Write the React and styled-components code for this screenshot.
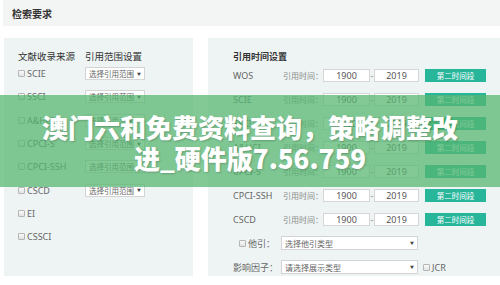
import React from "react";
import styled, { createGlobalStyle } from "styled-components";

const GlobalStyle = createGlobalStyle`
  html, body {
    margin: 0;
    padding: 0;
    background: #ffffff;
  }
  body {
    font-family: "Noto Sans", "Noto Sans CJK SC", sans-serif;
    color: #666;
  }
`;

const sources = ["SCIE", "SSCI", "A&HCI", "CPCI-S", "CPCI-SSH", "CSCD", "EI", "CSSCI"];
const withRange = ["SCIE", "SSCI", "A&HCI", "CPCI-S", "CPCI-SSH", "CSCD"];
const timeRows = ["WOS", "SCIE", "SSCI", "A&HCI", "CPCI-S", "CPCI-SSH", "CSCD"];

function App() {
  return (
    <Page>
      <GlobalStyle />
      <Header>检索要求</Header>
      <Panels>
        <LeftPanel>
          <Grid>
            <ColTitle>文献收录来源</ColTitle>
            <ColTitle>引用范围设置</ColTitle>
            {sources.map((s) => (
              <React.Fragment key={s}>
                <Source>
                  <Check />
                  {s}
                </Source>
                <div>
                  {withRange.includes(s) && (
                    <SmallSelect>
                      选择引用范围<Arrow>▼</Arrow>
                    </SmallSelect>
                  )}
                </div>
              </React.Fragment>
            ))}
          </Grid>
        </LeftPanel>

        <RightPanel>
          <PanelTitle>引用时间设置</PanelTitle>
          {timeRows.map((r) => (
            <TimeRow key={r}>
              <RowLabel>{r}</RowLabel>
              <Hint>引用时间：</Hint>
              <YearBox $w={47}>1900</YearBox>
              <Dash>-</Dash>
              <YearBox $w={45}>2019</YearBox>
              <GreenButton>第二时间段</GreenButton>
            </TimeRow>
          ))}
          <TimeRow>
            <RowLabel $indent>
              <Check />
              他引：
            </RowLabel>
            <WideSelect>
              选择他引类型<Arrow>▼</Arrow>
            </WideSelect>
          </TimeRow>
          <TimeRow>
            <RowLabel>影响因子：</RowLabel>
            <WideSelect>
              请选择展示类型<Arrow>▼</Arrow>
            </WideSelect>
            <Jcr>
              <Check />
              JCR
            </Jcr>
          </TimeRow>
        </RightPanel>
      </Panels>

      <Banner>
        <BannerText>
          澳门六和免费资料查询，策略调整改
          <br />
          进_硬件版7.56.759
        </BannerText>
      </Banner>
    </Page>
  );
}

const Page = styled.div`
  position: relative;
  width: 500px;
  height: 285px;
  overflow: hidden;
  padding-left: 4px;
  box-sizing: border-box;
`;

const Header = styled.div`
  height: 26px;
  margin-left: -1px;
  padding-left: 9px;
  display: flex;
  align-items: center;
  background: #f3f4f4;
  color: #333;
  font-family: "Noto Sans CJK SC", sans-serif;
  font-size: 10px;
  font-weight: 700;
`;

const Panels = styled.div`
  display: flex;
  gap: 15px;
  margin-top: 12px;
  height: 238px;
`;

const LeftPanel = styled.div`
  width: 189px;
  background: #eef4f4;
  padding: 12px 0 0 14px;
  box-sizing: border-box;
`;

const Grid = styled.div`
  display: grid;
  grid-template-columns: 67px 1fr;
  grid-template-rows: 12px;
  grid-auto-rows: 23.3px;
  align-items: center;
`;

const ColTitle = styled.div`
  color: #333;
  font-family: "Noto Sans CJK SC", sans-serif;
  font-size: 9.5px;
  line-height: 12px;
  white-space: nowrap;
`;

const Source = styled.div`
  display: flex;
  align-items: center;
  font-size: 9px;
  color: #666;
`;

const Check = styled.span`
  display: inline-block;
  width: 5px;
  height: 5px;
  margin-right: 2px;
  border: 1px solid #b5b5b5;
  border-radius: 1px;
  background: linear-gradient(#fafafa, #e2e2e2);
`;

const SmallSelect = styled.div`
  width: 60px;
  height: 13px;
  box-sizing: border-box;
  border: 1px solid #d4d4d4;
  background: #fff;
  display: flex;
  align-items: center;
  padding-left: 3px;
  font-family: "Noto Sans CJK SC", sans-serif;
  font-size: 7.5px;
  color: #666;
  white-space: nowrap;
`;

const Arrow = styled.span`
  margin-left: auto;
  margin-right: 3px;
  font-size: 4px;
  color: #444;
`;

const RightPanel = styled.div`
  flex: 1;
  background: #eef4f4;
  padding: 13px 0 0 25px;
  box-sizing: border-box;
`;

const PanelTitle = styled.div`
  height: 12px;
  line-height: 12px;
  color: #333;
  font-family: "Noto Sans CJK SC", sans-serif;
  font-size: 9px;
  font-weight: 700;
`;

const TimeRow = styled.div`
  height: 24px;
  display: flex;
  align-items: center;
`;

const RowLabel = styled.div`
  width: 48px;
  padding-left: ${(p) => (p.$indent ? "6px" : "0")};
  box-sizing: border-box;
  display: flex;
  align-items: center;
  font-size: 9px;
  color: #666;
  white-space: nowrap;
  font-family: "Noto Sans", "Noto Sans CJK SC", sans-serif;
`;

const Hint = styled.div`
  width: 40px;
  padding-left: 2px;
  font-family: "Noto Sans CJK SC", sans-serif;
  font-size: 8px;
  color: #8a8a8a;
  white-space: nowrap;
`;

const YearBox = styled.div`
  width: ${(p) => p.$w}px;
  height: 13px;
  box-sizing: border-box;
  border: 1px solid #d6d6d6;
  background: #fff;
  display: flex;
  align-items: center;
  justify-content: center;
  font-size: 9px;
  color: #555;
`;

const Dash = styled.div`
  width: 4px;
  text-align: center;
  font-size: 8px;
  color: #888;
`;

const GreenButton = styled.div`
  width: 61px;
  height: 13px;
  margin-left: 6px;
  background: #28b69b;
  color: #fff;
  display: flex;
  align-items: center;
  justify-content: center;
  font-family: "Noto Sans CJK SC", sans-serif;
  font-size: 7.5px;
`;

const WideSelect = styled(SmallSelect)`
  width: 137px;
  height: 14px;
  font-size: 8px;
`;

const Jcr = styled.div`
  display: flex;
  align-items: center;
  margin-left: 5px;
  font-size: 9px;
  color: #666;
`;

const Banner = styled.div`
  position: absolute;
  left: 0;
  top: 95px;
  width: 500px;
  height: 92px;
  background: rgba(86, 182, 112, 0.74);
  display: flex;
  align-items: center;
  justify-content: center;
`;

const BannerText = styled.div`
  color: #fff;
  font-family: "Noto Sans CJK SC", sans-serif;
  font-weight: 900;
  font-size: 26px;
  line-height: 31px;
  text-align: center;
  text-shadow: 1px 1px 2px rgba(0, 0, 0, 0.2);
  margin-top: 2px;
`;

export default App;
